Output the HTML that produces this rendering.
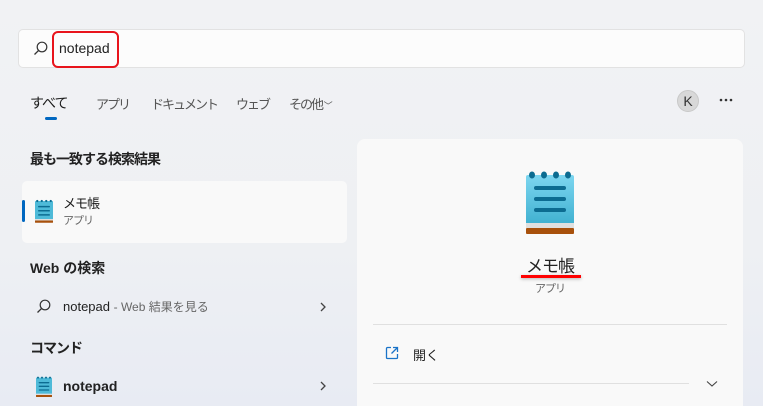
<!DOCTYPE html>
<html><head><meta charset="utf-8"><style>
*{margin:0;padding:0;box-sizing:border-box}
html,body{width:763px;height:406px;overflow:hidden}
body{position:relative;font-family:"Liberation Sans","Noto Sans CJK JP",sans-serif;background:linear-gradient(180deg,#f1f2f4 0%,#eef0f3 60%,#e8ebf3 100%);color:#1a1a1a}
.a{position:absolute;white-space:nowrap}
.t{font-size:13px;color:#555;letter-spacing:-2px}
.h{font-size:14px;font-weight:600;color:#222}
</style></head><body>
<div class="a" style="left:18px;top:29px;width:727px;height:39px;background:#fcfcfc;border:1px solid #e2e2e2;border-radius:5px"></div>
<svg class="a" style="left:33px;top:41px" width="15" height="15" viewBox="0 0 15 15"><circle cx="9" cy="6" r="4.8" fill="none" stroke="#333" stroke-width="1.2"/><path d="M5.6 9.4L1.5 13.5" stroke="#333" stroke-width="1.3"/></svg>
<div class="a" style="left:52px;top:31px;width:67px;height:37px;border:2px solid #e8141c;border-radius:6px"></div>
<div class="a" style="left:59px;top:40px;font-size:14px;color:#222">notepad</div>
<div class="a" style="left:30px;top:93px;font-size:14px;color:#1a1a1a;letter-spacing:-1px">すべて</div>
<div class="a" style="left:45px;top:117px;width:12px;height:3px;border-radius:2px;background:#0067c0"></div>
<div class="a t" style="left:96px;top:94px">アプリ</div>
<div class="a t" style="left:151px;top:94px">ドキュメント</div>
<div class="a t" style="left:236px;top:94px">ウェブ</div>
<div class="a t" style="left:289px;top:94px">その他 <span style="font-size:9px;letter-spacing:0">﹀</span></div>
<div class="a" style="left:677px;top:90px;width:22px;height:22px;border-radius:50%;background:#d8d8d8;border:1px solid #c8c8c8;font-size:14px;text-align:center;line-height:20px;color:#333">K</div>
<svg class="a" style="left:719px;top:98px" width="14" height="4"><circle cx="2" cy="2" r="1.3" fill="#333"/><circle cx="7" cy="2" r="1.3" fill="#333"/><circle cx="12" cy="2" r="1.3" fill="#333"/></svg>
<div class="a h" style="left:30px;top:149px;letter-spacing:-1px">最も一致する検索結果</div>
<div class="a" style="left:22px;top:181px;width:325px;height:62px;background:#f9f9f9;border-radius:5px"></div>
<div class="a" style="left:22px;top:200px;width:3px;height:22px;background:#0067c0;border-radius:2px"></div>
<svg class="a" style="left:35px;top:199px" width="18" height="25" viewBox="0 0 48 64"><rect x="0" y="4" width="48" height="54" rx="2" fill="#4ebad8"/><rect x="0" y="52" width="48" height="4" fill="#ddd"/><rect x="0" y="56" width="48" height="6" rx="1" fill="#a8510c"/><g fill="#0c6c91"><circle cx="6" cy="4" r="3"/><circle cx="18" cy="4" r="3"/><circle cx="30" cy="4" r="3"/><circle cx="42" cy="4" r="3"/><rect x="8" y="17" width="32" height="4" rx="2"/><rect x="8" y="28" width="32" height="4" rx="2"/><rect x="8" y="39" width="32" height="4" rx="2"/></g></svg>
<div class="a" style="left:63px;top:193px;font-size:13px;letter-spacing:-1px">メモ帳</div>
<div class="a" style="left:63px;top:212px;font-size:11px;color:#666;letter-spacing:-1px">アプリ</div>
<div class="a h" style="left:30px;top:258px">Web の検索</div>
<svg class="a" style="left:36px;top:299px" width="15" height="15" viewBox="0 0 15 15"><circle cx="9" cy="6" r="4.8" fill="none" stroke="#333" stroke-width="1.2"/><path d="M5.6 9.4L1.5 13.5" stroke="#333" stroke-width="1.3"/></svg>
<div class="a" style="left:63px;top:298px;font-size:13px;color:#222">notepad <span style="font-size:12px;color:#666">- Web 結果を見る</span></div>
<svg class="a" style="left:320px;top:302px" width="6" height="10" viewBox="0 0 6 10"><path d="M1 1L5 5L1 9" fill="none" stroke="#444" stroke-width="1.3"/></svg>
<div class="a h" style="left:30px;top:338px;letter-spacing:-1px">コマンド</div>
<svg class="a" style="left:36px;top:376px" width="16" height="22" viewBox="0 0 48 64"><rect x="0" y="4" width="48" height="54" rx="2" fill="#4ebad8"/><rect x="0" y="52" width="48" height="4" fill="#ddd"/><rect x="0" y="56" width="48" height="6" rx="1" fill="#a8510c"/><g fill="#0c6c91"><circle cx="6" cy="4" r="3"/><circle cx="18" cy="4" r="3"/><circle cx="30" cy="4" r="3"/><circle cx="42" cy="4" r="3"/><rect x="8" y="17" width="32" height="4" rx="2"/><rect x="8" y="28" width="32" height="4" rx="2"/><rect x="8" y="39" width="32" height="4" rx="2"/></g></svg>
<div class="a" style="left:63px;top:378px;font-size:14px;font-weight:bold;color:#222">notepad</div>
<svg class="a" style="left:320px;top:381px" width="6" height="10" viewBox="0 0 6 10"><path d="M1 1L5 5L1 9" fill="none" stroke="#444" stroke-width="1.3"/></svg>
<div class="a" style="left:357px;top:139px;width:386px;height:280px;background:#f9f9f9;border-radius:8px"></div>
<svg class="a" style="left:526px;top:171px" width="48" height="64" viewBox="0 0 48 64"><defs><linearGradient id="g" x1="0" y1="0" x2="0" y2="1"><stop offset="0" stop-color="#7dd6f0"/><stop offset="1" stop-color="#3fb0d0"/></linearGradient></defs><rect x="0" y="4" width="48" height="50" rx="2" fill="url(#g)"/><rect x="0" y="52" width="48" height="5" fill="#e0e0e0"/><rect x="0" y="57" width="48" height="6" rx="1" fill="#a8510c"/><g fill="#0c6c91"><ellipse cx="6" cy="4" rx="3" ry="3.5"/><ellipse cx="18" cy="4" rx="3" ry="3.5"/><ellipse cx="30" cy="4" rx="3" ry="3.5"/><ellipse cx="42" cy="4" rx="3" ry="3.5"/><rect x="8" y="15" width="32" height="4" rx="2"/><rect x="8" y="26" width="32" height="4" rx="2"/><rect x="8" y="37" width="32" height="4" rx="2"/></g></svg>
<div class="a" style="left:500px;top:252px;width:100px;text-align:center;font-size:17px;color:#222;letter-spacing:-1px">メモ帳</div>
<div class="a" style="left:521px;top:275px;width:60px;height:3px;background:#f00;box-shadow:0 1px 3px rgba(0,0,0,.3)"></div>
<div class="a" style="left:500px;top:280px;width:100px;text-align:center;font-size:11px;color:#666;letter-spacing:-1px">アプリ</div>
<div class="a" style="left:373px;top:324px;width:354px;height:1px;background:#e0e0e0"></div>
<svg class="a" style="left:385px;top:346px" width="14" height="14" viewBox="0 0 14 14" fill="none" stroke="#1a73c8" stroke-width="1.3"><path d="M6 1.5H2.5a1 1 0 0 0-1 1v9a1 1 0 0 0 1 1h9a1 1 0 0 0 1-1V8"/><path d="M8 1.5h4.5V6M12.5 1.5L6.5 7.5"/></svg>
<div class="a" style="left:413px;top:345px;font-size:13px;color:#222">開く</div>
<div class="a" style="left:373px;top:383px;width:316px;height:1px;background:#e0e0e0"></div>
<svg class="a" style="left:706px;top:380px" width="12" height="8" viewBox="0 0 12 8"><path d="M1 1.5L6 6L11 1.5" fill="none" stroke="#444" stroke-width="1.1"/></svg>
</body></html>
